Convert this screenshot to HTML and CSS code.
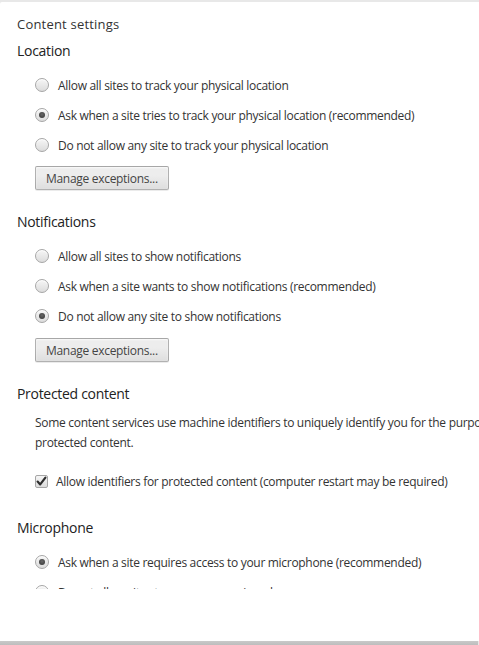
FILE: index.html
```html
<!DOCTYPE html>
<html>
<head>
<meta charset="utf-8">
<link rel="stylesheet" href="styles.css">
</head>
<body>
<div class="overlay">
  <div class="card">
    <div class="title">Content settings</div>
    <div class="scroll">
      <section class="group first">
        <h3 class="heading">Location</h3>
        <div class="option"><span class="radio"></span><span class="label">Allow all sites to track your physical location</span></div>
        <div class="option"><span class="radio on"></span><span class="label">Ask when a site tries to track your physical location (recommended)</span></div>
        <div class="option"><span class="radio"></span><span class="label">Do not allow any site to track your physical location</span></div>
        <button class="btn">Manage exceptions...</button>
      </section>
      <section class="group">
        <h3 class="heading">Notifications</h3>
        <div class="option"><span class="radio"></span><span class="label">Allow all sites to show notifications</span></div>
        <div class="option"><span class="radio"></span><span class="label">Ask when a site wants to show notifications (recommended)</span></div>
        <div class="option"><span class="radio on"></span><span class="label">Do not allow any site to show notifications</span></div>
        <button class="btn">Manage exceptions...</button>
      </section>
      <section class="group">
        <h3 class="heading">Protected content</h3>
        <p class="desc">Some content services use machine identifiers to uniquely identify you for the purposes of authorizing access to<br>protected content.</p>
        <div class="option check-row"><span class="checkbox"><svg viewBox="0 0 13 13" width="13" height="13"><path d="M2.6 6.6 L5.2 9.4 L10.4 2.6" fill="none" stroke="#2e2e2e" stroke-width="2.2" stroke-linecap="round" stroke-linejoin="round"/></svg></span><span class="label">Allow identifiers for protected content (computer restart may be required)</span></div>
      </section>
      <section class="group">
        <h3 class="heading">Microphone</h3>
        <div class="option"><span class="radio on"></span><span class="label">Ask when a site requires access to your microphone (recommended)</span></div>
        <div class="option"><span class="radio"></span><span class="label">Do not allow sites to access your microphone</span></div>
      </section>
    </div>
  </div>
  <div class="shade"></div>
</div>
</body>
</html>
```
FILE: styles.css
```css
html, body {
  margin: 0;
  padding: 0;
}
body {
  background: #e8e8e8;
  font-family: "Open Sans", "Noto Sans", sans-serif;
  color: #333;
  overflow: hidden;
}
.overlay {
  height: 645px;
  padding-top: 2px;
  box-sizing: border-box;
  display: flex;
  flex-direction: column;
}
.card {
  background: #fff;
  height: 639px;
  border-radius: 2px 0 0 0;
  overflow: hidden;
}
.shade {
  height: 4px;
  margin-right: 1px;
  background: linear-gradient(#c9c9c9, #bdbdbd);
}
.title {
  font-size: 13px;
  line-height: 20px;
  letter-spacing: 0.2px;
  padding: 12px 0 0 17px;
  color: #333;
}
.scroll {
  height: 555px;
  overflow: hidden;
}
.group {
  margin-top: 22px;
}
.group.first {
  margin-top: 7px;
}
.heading {
  margin: 0 0 9px 17px;
  font-size: 14px;
  font-weight: normal;
  line-height: 20px;
  letter-spacing: -0.3px;
  color: #222;
}
.option {
  display: flex;
  align-items: center;
  height: 30px;
  padding-left: 35px;
  font-size: 12px;
  letter-spacing: -0.3px;
  white-space: nowrap;
}
.radio {
  position: relative;
  flex: none;
  width: 14px;
  height: 14px;
  margin-right: 9px;
  box-sizing: border-box;
  border-radius: 50%;
  border: 1px solid #a6a6a6;
  background: linear-gradient(#f6f6f6, #dcdcdc);
  box-shadow: inset 0 1px 0 #fff;
}
.radio.on::after {
  content: "";
  position: absolute;
  left: 3px;
  top: 3px;
  width: 6px;
  height: 6px;
  border-radius: 50%;
  background: radial-gradient(circle at 50% 40%, #666, #333);
}
.check-row {
  margin-top: 13px;
}
.checkbox {
  flex: none;
  width: 13px;
  height: 13px;
  margin-right: 8px;
  box-sizing: border-box;
  border: 1px solid #a6a6a6;
  border-radius: 2px;
  background: linear-gradient(#f6f6f6, #dcdcdc);
  display: flex;
  align-items: center;
  justify-content: center;
}
.checkbox svg {
  display: block;
  flex: none;
}
.btn {
  display: block;
  margin: 6px 0 0 35px;
  height: 24px;
  padding: 0 10px;
  font-family: inherit;
  font-size: 12px;
  letter-spacing: -0.3px;
  color: #444;
  border: 1px solid rgba(0, 0, 0, 0.25);
  border-radius: 2px;
  background: linear-gradient(#ededed, #ededed 38%, #dedede);
  box-shadow: 0 1px 0 rgba(0, 0, 0, 0.08), inset 0 1px 2px rgba(255, 255, 255, 0.75);
}
.group + .group .btn {
  margin-top: 7px;
}
.desc {
  margin: 9px 0 0;
  padding-left: 35px;
  font-size: 12px;
  line-height: 20px;
  letter-spacing: -0.3px;
  white-space: nowrap;
}
```
